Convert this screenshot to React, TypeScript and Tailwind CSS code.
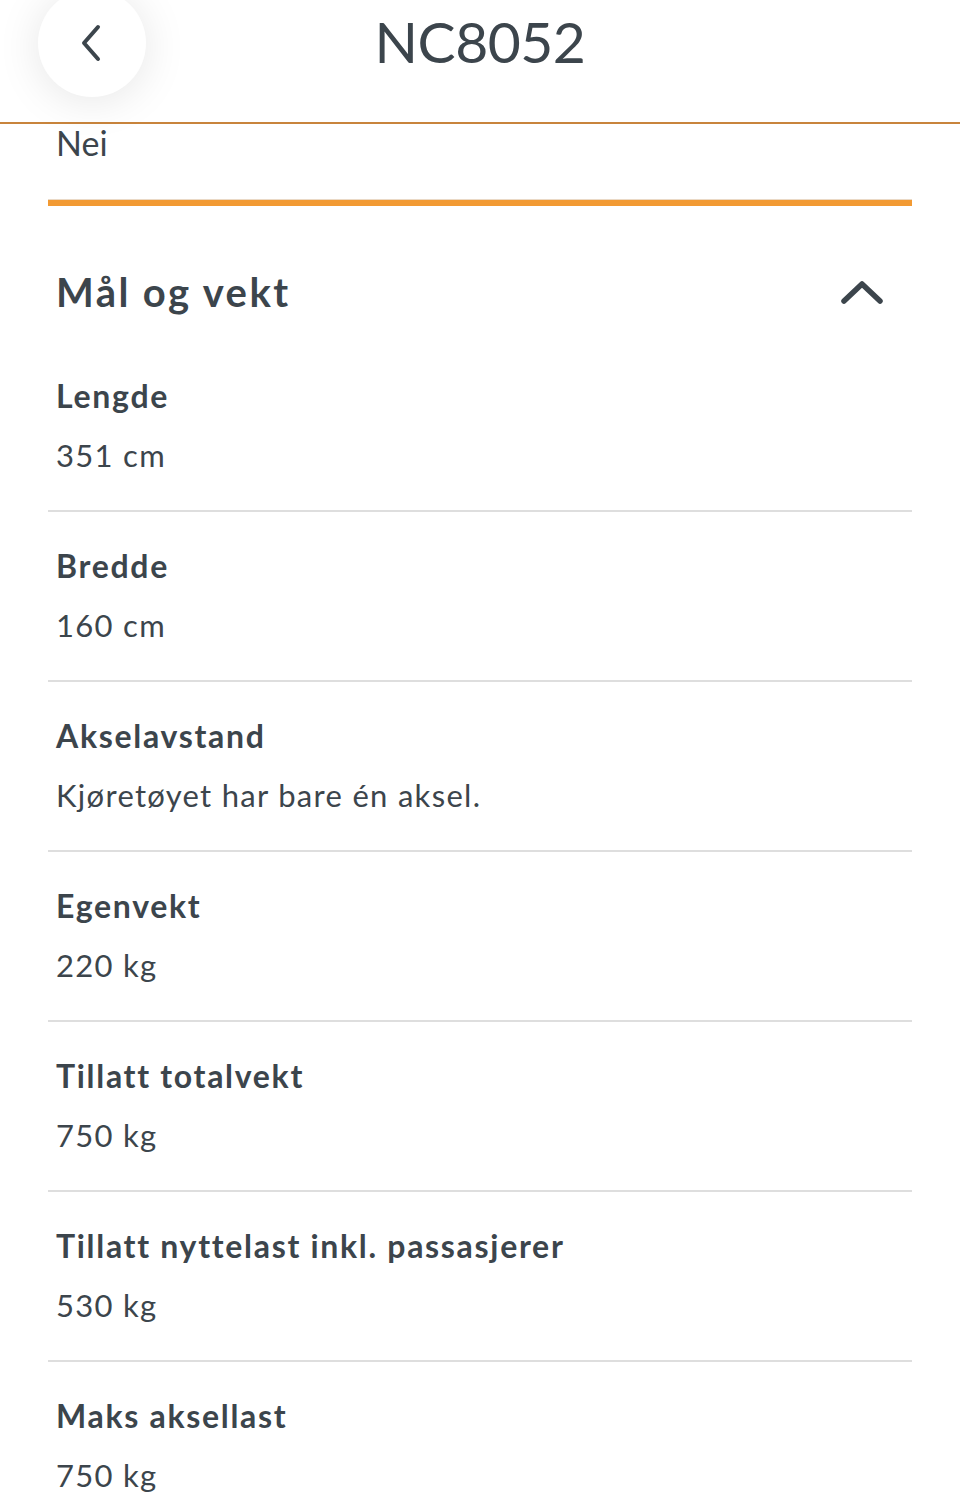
import React from "react";

const rows: { label: string; value: string }[] = [
  { label: "Lengde", value: "351 cm" },
  { label: "Bredde", value: "160 cm" },
  { label: "Akselavstand", value: "Kjøretøyet har bare én aksel." },
  { label: "Egenvekt", value: "220 kg" },
  { label: "Tillatt totalvekt", value: "750 kg" },
  { label: "Tillatt nyttelast inkl. passasjerer", value: "530 kg" },
  { label: "Maks aksellast", value: "750 kg" },
];

export default function App() {
  return (
    <div
      className="w-[960px] h-[1509px] overflow-hidden bg-white text-[#3c454c]"
      style={{ fontFamily: "Lato, 'Noto Sans', sans-serif" }}
    >
      <header className="relative z-10 h-[124px] bg-white border-b-2 border-[#c8843c] flex items-center justify-center">
        <div className="absolute left-[38px] top-[-11px] w-[108px] h-[108px] rounded-full bg-white shadow-[0_4px_44px_rgba(0,0,0,0.10)] flex items-center justify-center">
          <svg width="30" height="40" viewBox="0 0 30 40" fill="none">
            <path d="M21 4 L7 20 L21 36" stroke="#3c454c" strokeWidth="4" strokeLinecap="round" strokeLinejoin="round" />
          </svg>
        </div>
        <h1 className="text-[57px] leading-none font-normal -mt-[40px] tracking-[-0.5px]">NC8052</h1>
      </header>
      <div className="px-[48px]">
        <div className="px-[8px] text-[34px] leading-[40px] -mt-[1px]">Nei</div>
        <div className="mt-[36px] border-t border-[#ead9c6] h-[7px] bg-[#f29a33]" />
        <div className="mt-[62px] flex items-center justify-between pl-[8px] pr-[28px] h-[48px]">
          <h2 className="text-[40px] font-bold leading-[48px] tracking-[2.4px]">Mål og vekt</h2>
          <svg width="44" height="28" viewBox="0 0 44 28" fill="none">
            <path d="M4 23 L22 6 L40 23" stroke="#3c454c" strokeWidth="5.5" strokeLinecap="round" strokeLinejoin="round" />
          </svg>
        </div>
        <div className="mt-[26px]">
          {rows.map((r, i) => (
            <div key={i} className={i < rows.length - 1 ? "border-b-2 border-[#dedede]" : ""}>
              <div className="px-[8px] pt-[36px] pb-[37px]">
                <div className="text-[32px] font-bold leading-[36px] tracking-[1.7px]">{r.label}</div>
                <div className="mt-[23px] text-[31px] leading-[36px] tracking-[1.3px]">{r.value}</div>
              </div>
            </div>
          ))}
        </div>
      </div>
    </div>
  );
}
